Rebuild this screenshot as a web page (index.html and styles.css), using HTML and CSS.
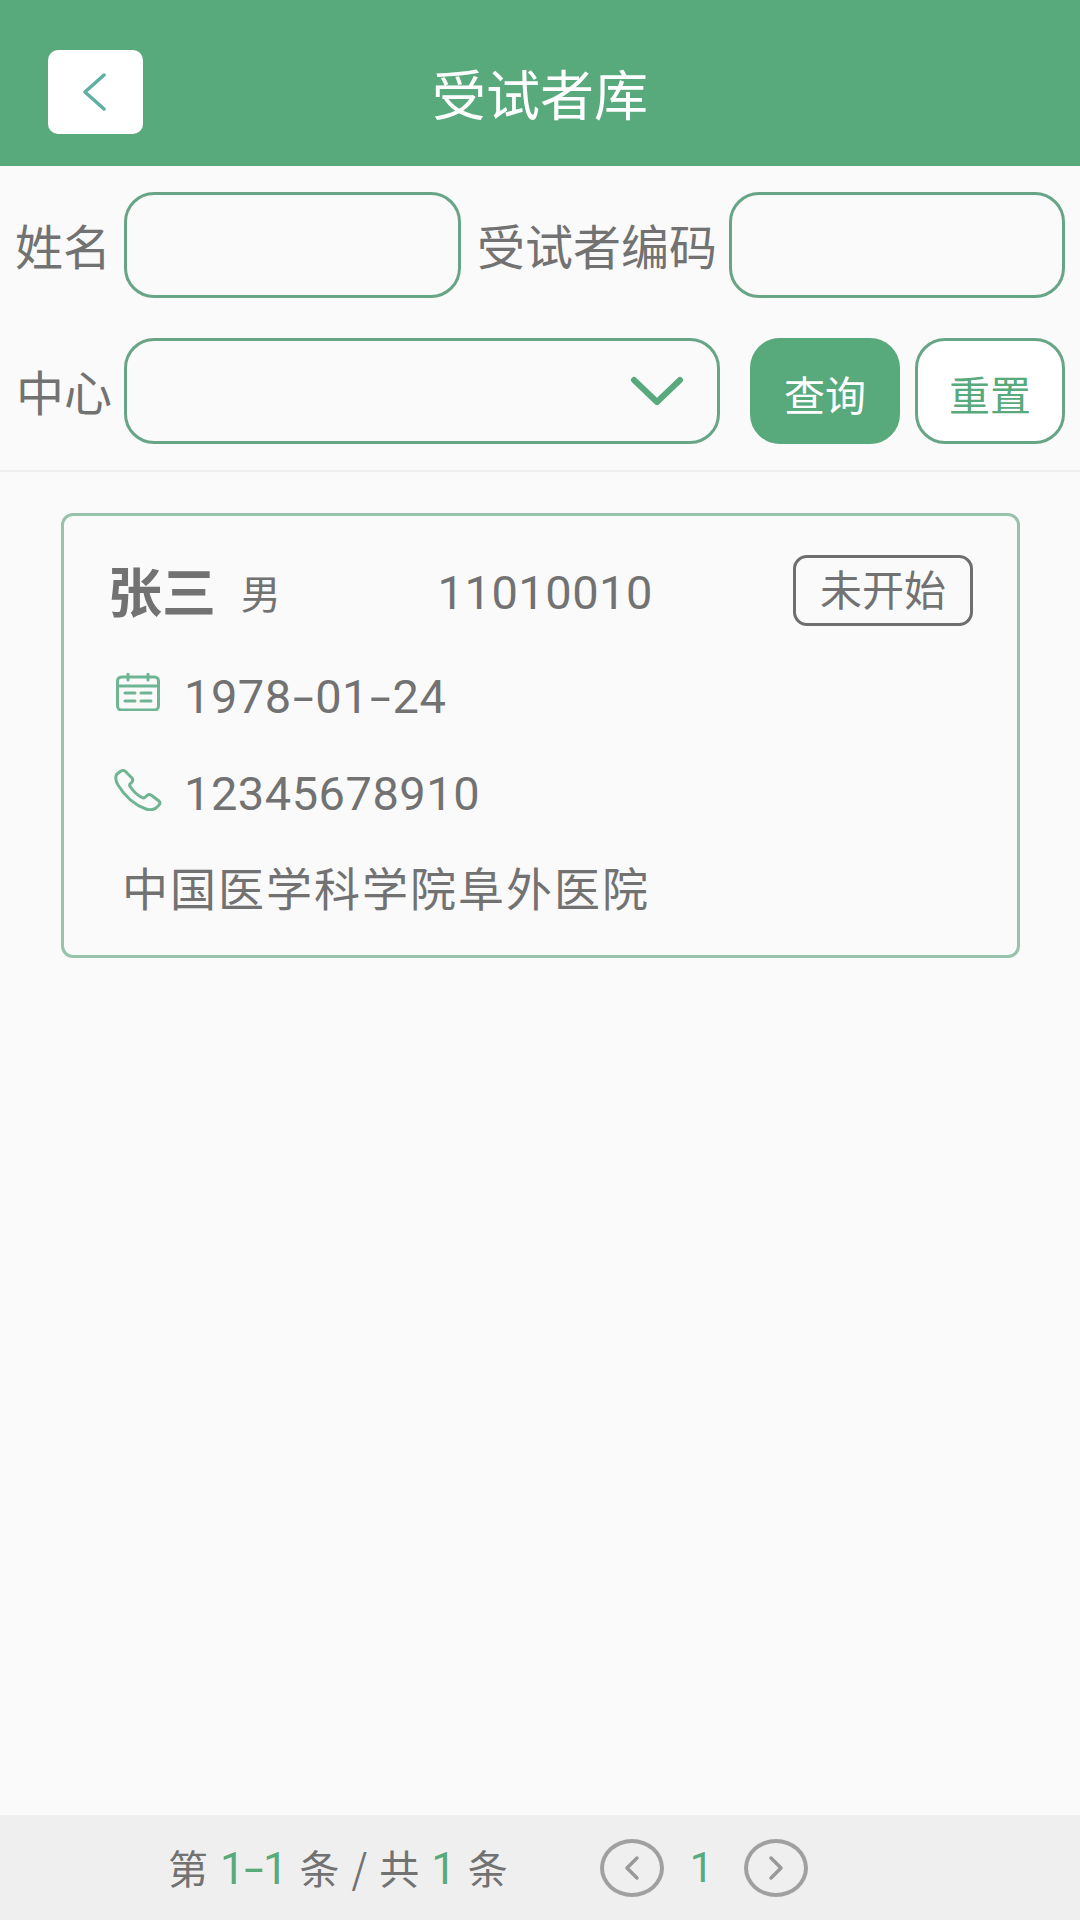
FILE: index.html
```html
<!DOCTYPE html>
<html lang="zh-CN">
<head>
<meta charset="UTF-8">
<meta name="viewport" content="width=device-width, initial-scale=1.0">
<title>受试者库</title>
<link rel="stylesheet" href="styles.css">
</head>
<body>

<div class="page">
    <div class="header">
        <button class="back-btn" type="button">
            <svg width="24" height="38" viewBox="0 0 24 38"><path d="M22 2 L3 19 L22 36" fill="none" stroke="#5fb0a0" stroke-width="3.5" stroke-linecap="round" stroke-linejoin="round"/></svg>
        </button>
        <div class="title">受试者库</div>
    </div>

    <div class="filters">
        <div class="filter-row">
            <label class="label label-name">姓名</label>
            <input class="field field-name" type="text">
            <label class="label label-code">受试者编码</label>
            <input class="field field-code" type="text">
        </div>
        <div class="filter-row filter-row-second">
            <label class="label label-center">中心</label>
            <div class="field select">
                <svg width="54" height="30" viewBox="0 0 54 30"><path d="M4 4 L27 26 L50 4" fill="none" stroke="#58a97c" stroke-width="6" stroke-linecap="round" stroke-linejoin="round"/></svg>
            </div>
            <button class="btn btn-search" type="button">查询</button>
            <button class="btn btn-reset" type="button">重置</button>
        </div>
    </div>

    <div class="list">
        <div class="card">
            <div class="card-top">
                <span class="name">张三</span>
                <span class="gender">男</span>
                <span class="code">11010010</span>
                <span class="tag">未开始</span>
            </div>
            <div class="info-row info-date">
                <svg class="icon" width="44" height="38" viewBox="0 0 44 38" fill="none" stroke="#6fb593" stroke-width="3" stroke-linecap="round">
                    <rect x="1.5" y="4" width="41" height="33" rx="4"/>
                    <path d="M2 13 H42 M12 1 V7 M32 1 V7"/>
                    <path d="M9 20 H19 M25 20 H35 M9 28 H19 M25 28 H35"/>
                </svg>
                <span>1978<span class="dash">-</span>01<span class="dash">-</span>24</span>
            </div>
            <div class="info-row info-phone">
                <svg class="icon" width="48" height="42" viewBox="0 0 48 42" fill="none" stroke="#6fb593" stroke-width="3" stroke-linejoin="round">
                    <path d="M11 2 L18 9 Q19.5 11 18 13 L16 15 Q15 16.5 16.5 18 Q21 25 28 28.5 Q30 29.5 31.5 28 L33 26.5 Q35 25 37 26 L45 32 Q47 34 45 36 L42 39 Q38 42 32 40 Q15 34 4 16 Q0 9 3 5 L7 2 Q9 1 11 2 Z"/>
                </svg>
                <span>12345678910</span>
            </div>
            <div class="hospital">中国医学科学院阜外医院</div>
        </div>
    </div>

    <div class="footer">
        <div class="summary">第 <em>1<span class="dash">-</span>1</em> 条 / 共 <em>1</em> 条</div>
        <div class="pager">
            <button class="page-btn" type="button">
                <svg width="16" height="26" viewBox="0 0 16 26"><path d="M13 3 L3 13 L13 23" fill="none" stroke="#999" stroke-width="3.5" stroke-linecap="round" stroke-linejoin="round"/></svg>
            </button>
            <span class="page-num">1</span>
            <button class="page-btn" type="button">
                <svg width="16" height="26" viewBox="0 0 16 26"><path d="M3 3 L13 13 L3 23" fill="none" stroke="#999" stroke-width="3.5" stroke-linecap="round" stroke-linejoin="round"/></svg>
            </button>
        </div>
    </div>
</div>

</body>
</html>
```

FILE: styles.css
```css
* {
    box-sizing: border-box;
}
body {
    margin: 0;
    font-family: "Noto Sans CJK SC", "Noto Sans", sans-serif;
    background-color: #FAFAFA;
    color: #727272;
}
button {
    font-family: inherit;
    padding: 0;
}
.page {
    width: 1080px;
    height: 1920px;
    display: flex;
    flex-direction: column;
    overflow: hidden;
}

/* Header */
.header {
    height: 166px;
    flex: none;
    background-color: #58A97C;
    display: grid;
    grid-template-columns: 1fr auto 1fr;
    align-items: center;
    padding: 18px 48px 0;
}
.back-btn {
    width: 95px;
    height: 84px;
    background-color: #FFFFFF;
    border: none;
    border-radius: 10px;
    display: flex;
    align-items: center;
    justify-content: center;
    padding-right: 3px;
}
.title {
    color: #FFFFFF;
    font-size: 54px;
    line-height: 60px;
    padding-top: 2px;
}

/* Filters */
.filters {
    flex: none;
    height: 306px;
    padding-top: 26px;
    border-bottom: 2px solid #EFEFEF;
}
.filter-row {
    display: flex;
    align-items: center;
    height: 106px;
}
.filter-row-second {
    margin-top: 40px;
}
.label {
    font-size: 48px;
    line-height: 60px;
    padding-bottom: 3px;
    flex: none;
}
.label-name {
    width: 124px;
    padding-left: 15px;
}
.label-code {
    width: 268px;
    padding-left: 16px;
}
.label-center {
    width: 124px;
    padding-left: 16px;
}
.field {
    height: 106px;
    background-color: transparent;
    border: 3px solid #68A587;
    border-radius: 30px;
    outline: none;
    flex: none;
}
.field-name {
    width: 337px;
}
.field-code {
    width: 336px;
}
.select {
    width: 596px;
    display: flex;
    align-items: center;
    justify-content: flex-end;
    padding-right: 33px;
}
.btn {
    width: 150px;
    height: 106px;
    border-radius: 30px;
    font-size: 41px;
    padding-top: 3px;
    flex: none;
}
.btn-search {
    margin-left: 30px;
    background-color: #58A97C;
    border: 2px solid #58A97C;
    color: #FFFFFF;
}
.btn-reset {
    margin-left: 15px;
    background-color: #FFFFFF;
    border: 3px solid #68A587;
    color: #58A97C;
}

/* Card */
.list {
    flex: 1;
    padding: 41px 60px 0 61px;
}
.card {
    height: 445px;
    border: 3px solid #97C2AB;
    border-radius: 12px;
    padding: 38px 44px 0 44px;
}
.card-top {
    display: flex;
    align-items: center;
    height: 72px;
}
.name {
    font-size: 54px;
    font-weight: 700;
    line-height: 60px;
    width: 133px;
}
.gender {
    font-size: 40px;
    line-height: 50px;
    width: 197px;
    padding-top: 4px;
}
.code {
    font-family: Roboto, "Noto Sans", sans-serif;
    font-size: 47px;
    letter-spacing: 0.5px;
    width: 356px;
    padding-top: 4px;
}
.tag {
    width: 180px;
    height: 71px;
    border: 3px solid #6E6E6E;
    border-radius: 14px;
    font-size: 42px;
    line-height: 60px;
    text-align: center;
}
.info-row {
    display: flex;
    align-items: center;
    font-family: Roboto, "Noto Sans", sans-serif;
    font-size: 47px;
    letter-spacing: 0.5px;
    height: 60px;
}
.dash {
    display: inline-block;
    margin: 0 5px;
    transform: scaleX(1.6);
}
.info-date {
    margin-top: 40px;
    padding-left: 8px;
}
.info-date .icon {
    margin-right: 24px;
    margin-bottom: 8px;
}
.info-phone {
    margin-top: 37px;
    padding-left: 6px;
}
.info-phone .icon {
    margin-right: 22px;
    margin-bottom: 6px;
}
.hospital {
    font-size: 46px;
    line-height: 60px;
    letter-spacing: 2px;
    margin-top: 33px;
    padding-left: 14px;
}

/* Footer */
.footer {
    flex: none;
    height: 105px;
    background-color: #EFEFEF;
    display: flex;
    align-items: center;
    padding-left: 168px;
}
.summary {
    font-size: 40px;
    line-height: 50px;
    word-spacing: 3px;
    width: 432px;
    white-space: pre;
}
.summary em {
    font-style: normal;
    font-family: Roboto, "Noto Sans", sans-serif;
    font-size: 44px;
    color: #58A97C;
}
.summary .dash {
    margin: 0 3px;
}
.pager {
    display: flex;
    align-items: center;
}
.page-btn {
    width: 64px;
    height: 58px;
    border: 4px solid #A0A0A0;
    border-radius: 50%;
    background: transparent;
    display: flex;
    align-items: center;
    justify-content: center;
}
.page-num {
    width: 80px;
    padding-right: 5px;
    text-align: center;
    font-family: Roboto, "Noto Sans", sans-serif;
    font-size: 42px;
    color: #58A97C;
}
```
